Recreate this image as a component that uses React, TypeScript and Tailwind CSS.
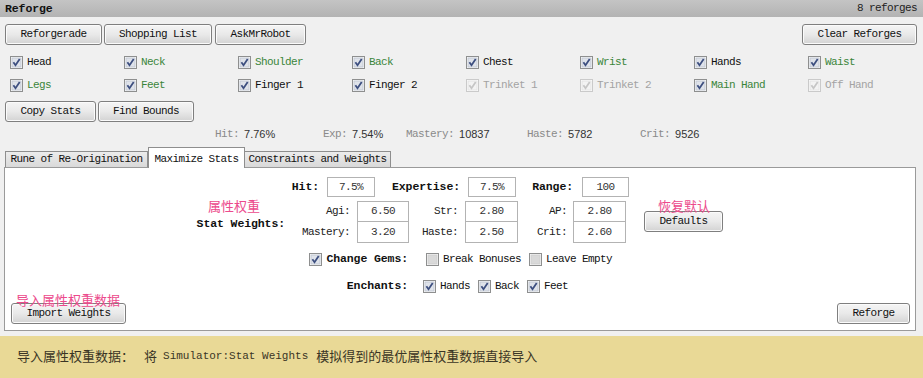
import React from "react";

const mono = "font-['Liberation_Mono',monospace] text-[11px] tracking-[-0.6px]";
const bold = "font-['Liberation_Mono',monospace] font-bold text-[11.5px] tracking-[-0.1px]";
const pink = "font-['Noto_Sans_CJK_SC',sans-serif] text-[13px] leading-none text-[#ec4a8c] whitespace-nowrap";

function Box({ checked = true, disabled = false }: { checked?: boolean; disabled?: boolean }) {
  return (
    <svg width="13" height="13" viewBox="0 0 13 13" className="shrink-0">
      <rect x="0.5" y="0.5" width="12" height="12" fill="#fff" stroke={disabled ? "#cacaca" : "#8e8f8f"} />
      <rect
        x="2"
        y="2"
        width="9"
        height="9"
        fill={disabled ? "#f3f3f3" : checked ? "#dfe3ea" : "#d9d9d9"}
        stroke={disabled ? "#e4e4e4" : checked ? "#c3c9d4" : "#cfcfcf"}
        strokeWidth="1"
      />
      {checked && (
        <path
          d="M3.4 6.3 L5.5 9.2 L9.7 3.1"
          fill="none"
          stroke={disabled ? "#c6c6c6" : "#3d4f80"}
          strokeWidth="1.8"
        />
      )}
    </svg>
  );
}

function Btn({ children, w }: { children: React.ReactNode; w: string }) {
  return (
    <div
      className={`${w} h-[21px] flex items-center justify-center rounded-[3px] border border-[#7f7f7f] bg-linear-to-b from-[#f5f5f5] via-[#e9e9e9] to-[#d3d3d3] shadow-[inset_0_0_0_1px_#fbfbfb] text-[#111] ${mono}`}
    >
      {children}
    </div>
  );
}

function Check({ label, color = "text-[#111]", disabled = false }: { label: string; color?: string; disabled?: boolean }) {
  return (
    <div className="flex items-center gap-[4px]">
      <Box disabled={disabled} />
      <span className={`${mono} ${disabled ? "text-[#a3a3a3]" : color}`}>{label}</span>
    </div>
  );
}

function Field({ value, w, h = "h-[21px]", extra = "" }: { value: string; w: string; h?: string; extra?: string }) {
  return (
    <div className={`${w} ${h} ${extra} border border-[#b3b3b3] bg-white flex items-center justify-center text-[#333] ${mono}`}>
      {value}
    </div>
  );
}

const green = "text-[#3a853a]";

const slots: { label: string; color?: string; disabled?: boolean }[] = [
  { label: "Head" },
  { label: "Neck", color: green },
  { label: "Shoulder", color: green },
  { label: "Back", color: green },
  { label: "Chest" },
  { label: "Wrist", color: green },
  { label: "Hands" },
  { label: "Waist", color: green },
  { label: "Legs", color: green },
  { label: "Feet", color: green },
  { label: "Finger 1" },
  { label: "Finger 2" },
  { label: "Trinket 1", disabled: true },
  { label: "Trinket 2", disabled: true },
  { label: "Main Hand", color: green },
  { label: "Off Hand", disabled: true },
];

const stats = [
  { label: "Hit:", value: "7.76%", w: "w-[108px]" },
  { label: "Exp:", value: "7.54%", w: "w-[83px]" },
  { label: "Mastery:", value: "10837", w: "w-[121px]" },
  { label: "Haste:", value: "5782", w: "w-[113px]" },
  { label: "Crit:", value: "9526", w: "w-[100px]" },
];

export default function App() {
  return (
    <div className="w-[923px] h-[378px] bg-[#f0f0f0] overflow-hidden flex flex-col">
      {/* title bar */}
      <div className="h-[17px] shrink-0 bg-linear-to-b from-[#c4c4c4] to-[#b3b3b3] flex items-center justify-between px-[5px] pr-[6px]">
        <span className={`${bold} text-[#111]`}>Reforge</span>
        <span className={`${mono} text-[#222]`}>8 reforges</span>
      </div>

      {/* top buttons */}
      <div className="mt-[7px] flex pl-[5px] pr-[6px]">
        <Btn w="w-[97px]">Reforgerade</Btn>
        <div className="ml-[2px]">
          <Btn w="w-[108px]">Shopping List</Btn>
        </div>
        <div className="ml-[3px]">
          <Btn w="w-[91px]">AskMrRobot</Btn>
        </div>
        <div className="ml-auto">
          <Btn w="w-[115px]">Clear Reforges</Btn>
        </div>
      </div>

      {/* slot checkboxes */}
      <div className="mt-[6px] grid grid-cols-[repeat(8,114px)] auto-rows-[23px] pl-[10px]">
        {slots.map((s) => (
          <div key={s.label} className="flex items-center">
            <Check label={s.label} color={s.color} disabled={s.disabled} />
          </div>
        ))}
      </div>

      {/* copy / bounds */}
      <div className="mt-[4px] flex gap-[2px] pl-[5px]">
        <Btn w="w-[91px]">Copy Stats</Btn>
        <Btn w="w-[96px]">Find Bounds</Btn>
      </div>

      {/* stats line */}
      <div className="mt-[2px] h-[20px] flex items-center pl-[215px]">
        {stats.map((s) => (
          <div key={s.label} className={`${s.w} flex items-center gap-[5px]`}>
            <span className={`${mono} text-[#8a8a8a]`}>{s.label}</span>
            <span className="font-['Liberation_Sans',sans-serif] text-[11px] text-[#333]">{s.value}</span>
          </div>
        ))}
      </div>

      {/* tabs */}
      <div className="mt-[3px] h-[20px] flex items-end pl-[5px]">
        <div className={`w-[143px] h-[16px] border border-b-0 border-[#8e8e8e] bg-linear-to-b from-[#ececec] to-[#d9d9d9] flex items-center justify-center text-[#111] ${mono}`}>
          Rune of Re-Origination
        </div>
        <div className={`relative z-10 -mb-px w-[97px] h-[21px] border border-b-0 border-[#8e8e8e] bg-white flex items-start pt-[3px] justify-center text-[#111] ${mono}`}>
          Maximize Stats
        </div>
        <div className={`w-[146px] h-[16px] border border-b-0 border-l-0 border-[#8e8e8e] bg-linear-to-b from-[#ececec] to-[#d9d9d9] flex items-center justify-center text-[#111] ${mono}`}>
          Constraints and Weights
        </div>
      </div>

      {/* panel */}
      <div className="ml-[4px] w-[912px] border border-[#9a9a9a] bg-white flex flex-col pb-[6px]">
        {/* hit row */}
        <div className="mt-[9px] flex items-center pl-[270px]">
          <div className={`w-[52px] text-right pr-[8px] text-[#111] ${bold}`}>Hit:</div>
          <Field value="7.5%" w="w-[48px]" h="h-[20px]" />
          <div className={`w-[93px] text-right pr-[8px] text-[#111] ${bold}`}>Expertise:</div>
          <Field value="7.5%" w="w-[48px]" h="h-[20px]" />
          <div className={`w-[66px] text-right pr-[9px] text-[#111] ${bold}`}>Range:</div>
          <Field value="100" w="w-[47px]" h="h-[20px]" />
        </div>

        {/* stat weights */}
        <div className="mt-[4px] flex items-center">
          <div className="relative w-[290px] h-[42px] flex items-center justify-end pr-[10px]">
            <span className={`absolute left-[203px] -top-[2px] text-[12px] ${pink}`}>属性权重</span>
            <span className={`mt-[3px] text-[#111] ${bold}`}>Stat Weights:</span>
          </div>
          <div className="flex flex-col">
            <div className="flex items-center">
              <div className={`w-[62px] text-right pr-[7px] text-[#222] ${mono}`}>Agi:</div>
              <Field value="6.50" w="w-[52px]" />
              <div className={`w-[56px] text-right pr-[7px] text-[#222] ${mono}`}>Str:</div>
              <Field value="2.80" w="w-[53px]" />
              <div className={`w-[55px] text-right pr-[6px] text-[#222] ${mono}`}>AP:</div>
              <Field value="2.80" w="w-[53px]" />
            </div>
            <div className="flex items-center">
              <div className={`w-[62px] text-right pr-[7px] text-[#222] ${mono}`}>Mastery:</div>
              <Field value="3.20" w="w-[52px]" extra="border-t-0" />
              <div className={`w-[56px] text-right pr-[7px] text-[#222] ${mono}`}>Haste:</div>
              <Field value="2.50" w="w-[53px]" extra="border-t-0" />
              <div className={`w-[55px] text-right pr-[6px] text-[#222] ${mono}`}>Crit:</div>
              <Field value="2.60" w="w-[53px]" extra="border-t-0" />
            </div>
          </div>
          <div className="relative ml-[18px] -mt-[1px]">
            <span className={`absolute left-[14px] -top-[12px] z-10 text-[12px] ${pink}`}>恢复默认</span>
            <Btn w="w-[79px]">Defaults</Btn>
          </div>
        </div>

        {/* gems */}
        <div className="mt-[7px] h-[18px] flex items-center">
          <div className="w-[403px] flex items-center justify-end gap-[4px]">
            <Box />
            <span className={`text-[#111] ${bold}`}>Change Gems:</span>
          </div>
          <div className="ml-[18px] flex items-center gap-[4px]">
            <Box checked={false} />
            <span className={`text-[#111] ${mono}`}>Break Bonuses</span>
          </div>
          <div className="ml-[8px] flex items-center gap-[4px]">
            <Box checked={false} />
            <span className={`text-[#111] ${mono}`}>Leave Empty</span>
          </div>
        </div>

        {/* enchants */}
        <div className="mt-[9px] h-[18px] flex items-center">
          <div className="w-[403px] flex justify-end">
            <span className={`text-[#111] ${bold}`}>Enchants:</span>
          </div>
          <div className="ml-[15px] flex items-center gap-[8px]">
            <Check label="Hands" />
            <Check label="Back" />
            <Check label="Feet" />
          </div>
        </div>

        {/* bottom buttons */}
        <div className="mt-[8px] flex items-center justify-between pl-[6px] pr-[5px]">
          <div className="relative">
            <span className={`absolute left-[5px] -top-[10px] z-10 ${pink}`}>导入属性权重数据</span>
            <Btn w="w-[115px]">Import Weights</Btn>
          </div>
          <Btn w="w-[73px]">Reforge</Btn>
        </div>
      </div>

      {/* footer note */}
      <div className="mt-[5px] flex-1 bg-[#e9d996] pl-[17px] pt-[12px]">
        <div className="font-['Noto_Sans_CJK_SC',sans-serif] text-[13px] leading-[16px] text-[#3a3525] flex items-center whitespace-nowrap">
          <span>导入属性权重数据：</span>
          <span className="ml-[10px]">将</span>
          <span className="ml-[6px] font-['Liberation_Mono',monospace] text-[11px]">Simulator:Stat Weights</span>
          <span className="ml-[8px]">模拟得到的最优属性权重数据直接导入</span>
        </div>
      </div>
    </div>
  );
}
